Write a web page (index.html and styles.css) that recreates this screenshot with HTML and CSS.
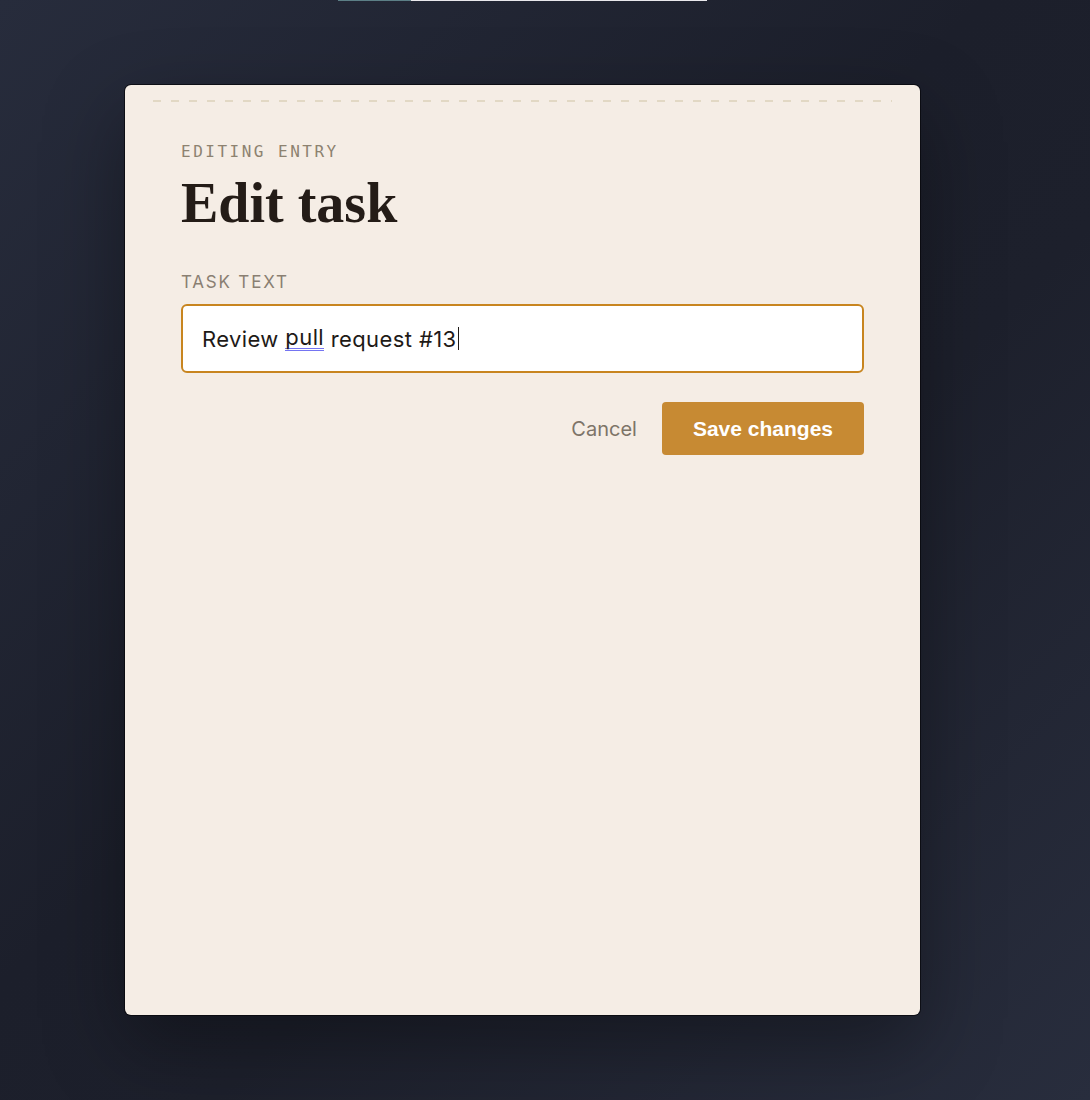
FILE: index.html
```html
<!DOCTYPE html>
<html lang="en">
  <head>
    <meta charset="UTF-8" />
    <meta name="viewport" content="width=device-width, initial-scale=1.0" />
    <title>Edit task</title>
    <link rel="stylesheet" href="styles.css">
  </head>
  <body>
    <div class="progress"><span class="progress-fill"></span></div>
    <div class="sheet">
      <div class="perforation"></div>
      <div class="sheet-body">
        <p class="eyebrow">EDITING ENTRY</p>
        <h1>Edit task</h1>
        <label class="field-label" for="taskText">TASK TEXT</label>
        <div class="field" id="taskText">Review <span class="flagged">pull</span> request #13<span class="caret"></span></div>
        <div class="actions">
          <button class="btn-link" type="button">Cancel</button>
          <button class="btn" type="submit">Save changes</button>
        </div>
      </div>
    </div>
  </body>
</html>
```
FILE: styles.css
```css
body {
  margin: 0;
  min-height: 1100px;
  background: linear-gradient(135deg, #272c3c 0%, #1c1f2b 45%, #1d202c 60%, #282d3d 100%);
  font-family: Inter, "Noto Sans", sans-serif;
}
.progress {
  display: flex;
  width: 369px;
  height: 1px;
  margin-left: 338px;
  background: #e9e8ec;
}
.progress-fill {
  width: 73px;
  background: #5c7f86;
}
.sheet {
  width: 795px;
  height: 930px;
  margin: 84px 0 0 125px;
  background: #f5ede5;
  border-radius: 6px;
  box-shadow: 0 0 0 1px rgba(5, 6, 10, 0.7), 0 30px 80px rgba(0, 0, 0, 0.35);
  padding-top: 15px;
  box-sizing: border-box;
}
.perforation {
  height: 2px;
  margin: 0 28px;
  background: repeating-linear-gradient(90deg, #e2d8c4 0 8px, transparent 8px 18px);
}
.sheet-body {
  padding: 41px 56px 40px;
}
.eyebrow {
  margin: 0;
  font-family: "DejaVu Sans Mono", "Liberation Mono", monospace;
  font-size: 16px;
  line-height: 18px;
  letter-spacing: 2.5px;
  color: #8d8270;
}
h1 {
  margin: 11px 0 0;
  font-family: "Liberation Serif", serif;
  font-size: 56px;
  line-height: 62px;
  font-weight: bold;
  color: #241c17;
}
.field-label {
  display: block;
  margin-top: 38px;
  font-size: 17px;
  line-height: 20px;
  letter-spacing: 1.8px;
  color: #8a7f72;
}
.field {
  margin-top: 12px;
  height: 69px;
  box-sizing: border-box;
  display: flex;
  align-items: center;
  padding: 0 19px;
  background: #fff;
  border: 2px solid #c8851f;
  border-radius: 6px;
  font-size: 22px;
  letter-spacing: 0.4px;
  color: #1e1a17;
  white-space: pre;
}
/* spellcheck-style double underline */
.flagged {
  line-height: 22px;
  border-bottom: 3px double #7474f2;
}
.caret {
  display: inline-block;
  width: 1px;
  height: 23px;
  margin-left: 1px;
  background: #1e1a17;
}
.actions {
  display: flex;
  justify-content: flex-end;
  align-items: center;
  gap: 25px;
  margin-top: 29px;
}
.btn-link {
  background: none;
  border: none;
  padding: 0;
  font-family: Inter, "Noto Sans", sans-serif;
  font-size: 20px;
  color: #7d7468;
  cursor: pointer;
}
.btn {
  height: 53px;
  padding: 0 31px;
  background-color: #c78a33;
  color: #fff;
  border: none;
  border-radius: 4px;
  font-family: "Liberation Sans", Arial, sans-serif;
  font-size: 21px;
  font-weight: bold;
  cursor: pointer;
}
```
